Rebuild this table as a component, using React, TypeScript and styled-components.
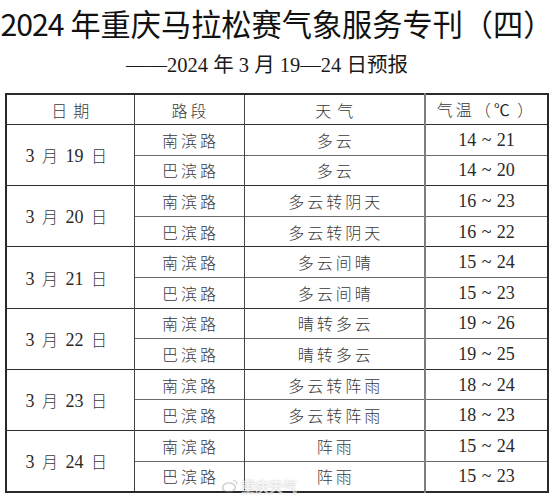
import React from "react";
import styled, { createGlobalStyle } from "styled-components";

const GlobalStyle = createGlobalStyle`
  html, body {
    margin: 0;
    padding: 0;
    background: #ffffff;
  }
`;

interface RoadRow {
  road: string
  weather: string
  temp: string
}

interface DayRow {
  day: string
  rows: [RoadRow, RoadRow]
}

const DAYS: DayRow[] = [
  { day: "19", rows: [{ road: "南滨路", weather: "多云", temp: "14 ~ 21" }, { road: "巴滨路", weather: "多云", temp: "14 ~ 20" }] },
  { day: "20", rows: [{ road: "南滨路", weather: "多云转阴天", temp: "16 ~ 23" }, { road: "巴滨路", weather: "多云转阴天", temp: "16 ~ 22" }] },
  { day: "21", rows: [{ road: "南滨路", weather: "多云间晴", temp: "15 ~ 24" }, { road: "巴滨路", weather: "多云间晴", temp: "15 ~ 23" }] },
  { day: "22", rows: [{ road: "南滨路", weather: "晴转多云", temp: "19 ~ 26" }, { road: "巴滨路", weather: "晴转多云", temp: "19 ~ 25" }] },
  { day: "23", rows: [{ road: "南滨路", weather: "多云转阵雨", temp: "18 ~ 24" }, { road: "巴滨路", weather: "多云转阵雨", temp: "18 ~ 23" }] },
  { day: "24", rows: [{ road: "南滨路", weather: "阵雨", temp: "15 ~ 24" }, { road: "巴滨路", weather: "阵雨", temp: "15 ~ 23" }] },
];

const Page = styled.div`
  position: relative;
  width: 554px;
  height: 500px;
  overflow: hidden;
  background: #ffffff;
`;

const Title = styled.h1`
  margin: 0;
  padding-top: 4px;
  height: 40px;
  text-align: center;
  font-family: "Noto Sans CJK SC", sans-serif;
  font-weight: 400;
  font-size: 30.2px;
  line-height: 38px;
  color: #111111;
  white-space: nowrap;
`;

const Digits = styled.span`
  letter-spacing: -1px;
`;

const Subtitle = styled.div`
  height: 49px;
  padding-right: 20px;
  text-align: center;
  font-family: "Liberation Serif", "Noto Sans CJK SC", serif;
  font-size: 20.5px;
  line-height: 42px;
  color: #1a1a1a;
  white-space: nowrap;
`;

const Table = styled.table`
  margin-left: 5px;
  width: 542px;
  border-collapse: collapse;
  table-layout: fixed;
  border: 2px solid #2a2a2a;
  font-family: "Noto Sans CJK SC", sans-serif;
  font-weight: 300;
  color: #3a3a3a;
`;

const Col = styled.col<{ w: number }>`
  width: ${p => p.w}px;
`;

const Row = styled.tr<{ group?: boolean }>`
  height: 30.6px;
  border-top: 1px solid ${p => (p.group ? "#2e2e2e" : "#6a6a6a")};
`;

const Cell = styled.td<{ wide?: boolean; first?: boolean }>`
  padding: 0;
  text-align: center;
  vertical-align: middle;
  font-size: 16px;
  letter-spacing: ${p => (p.wide ? "6px" : "3px")};
  text-indent: ${p => (p.wide ? "6px" : "3px")};
  line-height: 20px;
  border-left: ${p => (p.first ? "none" : "1px solid #444444")};
  white-space: nowrap;
`;

const TempCell = styled.td<{ head?: boolean }>`
  padding: 0;
  text-align: center;
  vertical-align: middle;
  font-family: "Liberation Serif", "Noto Sans CJK SC", serif;
  font-weight: 400;
  font-size: ${p => (p.head ? "16px" : "18px")};
  word-spacing: 1px;
  color: #2a2a2a;
  line-height: 20px;
  border-left: 2px solid #7d7d7d;
  white-space: nowrap;
`;

const HeadTemp = styled.span`
  font-family: "Noto Sans CJK SC", sans-serif;
  font-weight: 300;
  color: #3a3a3a;
  letter-spacing: 3px;
`;

const DateCell = styled.td`
  padding: 0 8px 0 0;
  text-align: center;
  vertical-align: middle;
  font-family: "Liberation Serif", "Noto Sans CJK SC", serif;
  font-size: 18px;
  word-spacing: 3px;
  color: #2a2a2a;
  white-space: nowrap;
`;

const LightCjk = styled.span`
  font-family: "Noto Sans CJK SC", sans-serif;
  font-weight: 300;
  font-size: 16px;
  color: #3a3a3a;
`;

const Watermark = styled.div`
  position: absolute;
  left: 222px;
  top: 476px;
  display: flex;
  align-items: center;
  gap: 3px;
  font-family: "Noto Sans CJK SC", sans-serif;
  font-size: 14px;
  font-weight: 700;
  color: rgba(255, 255, 255, 0.85);
  text-shadow: 0 0 2px rgba(90, 90, 90, 0.55);
  opacity: 0.75;
`;

const App: React.FC = () => {
  return (
    <Page>
      <GlobalStyle />
      <Title>
        <Digits>2024</Digits> 年重庆马拉松赛气象服务专刊（四）
      </Title>
      <Subtitle>——2024 年 3 月 19—24 日预报</Subtitle>
      <Table>
        <colgroup>
          <Col w={128} />
          <Col w={110} />
          <Col w={181} />
          <Col w={123} />
        </colgroup>
        <tbody>
          <Row group>
            <Cell wide first>日期</Cell>
            <Cell>路段</Cell>
            <Cell wide>天气</Cell>
            <TempCell head>
              <HeadTemp>气温（</HeadTemp>℃<HeadTemp> ）</HeadTemp>
            </TempCell>
          </Row>
          {DAYS.map(d => (
            <React.Fragment key={d.day}>
              <Row group>
                <DateCell rowSpan={2}>
                  3 <LightCjk>月</LightCjk> {d.day} <LightCjk>日</LightCjk>
                </DateCell>
                <Cell>{d.rows[0].road}</Cell>
                <Cell>{d.rows[0].weather}</Cell>
                <TempCell>{d.rows[0].temp}</TempCell>
              </Row>
              <Row>
                <Cell>{d.rows[1].road}</Cell>
                <Cell>{d.rows[1].weather}</Cell>
                <TempCell>{d.rows[1].temp}</TempCell>
              </Row>
            </React.Fragment>
          ))}
        </tbody>
      </Table>
      <Watermark>
        <svg width="16" height="14" viewBox="0 0 16 14">
          <ellipse cx="7" cy="8.5" rx="6.3" ry="4.6" fill="none" stroke="rgba(140,140,140,0.6)" strokeWidth="1.4" />
          <path d="M11 1.5 a4 4 0 0 1 4 4" fill="none" stroke="rgba(140,140,140,0.6)" strokeWidth="1.2" />
        </svg>
        重庆天气
      </Watermark>
    </Page>
  );
};

export default App;
